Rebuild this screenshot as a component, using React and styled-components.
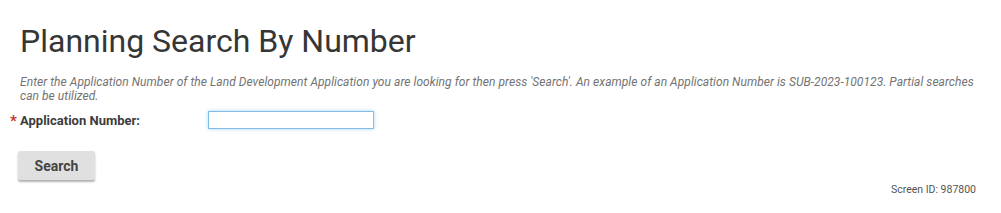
import React from 'react'
import styled, { createGlobalStyle } from 'styled-components'

const GlobalStyle = createGlobalStyle`
  body {
    margin: 0;
    background: #ffffff;
    font-family: Roboto, "Liberation Sans", Arial, sans-serif;
  }
`

const Page = styled.div`
  display: flex;
  flex-direction: column;
  padding: 22px 25px 0 20px;
`

const Title = styled.h1`
  margin: 0;
  font-size: 32px;
  line-height: 38px;
  font-weight: 400;
  color: #363636;
`

const Intro = styled.p`
  margin: 15px 0 0;
  font-size: 12px;
  line-height: 14px;
  font-style: italic;
  color: #737373;
  letter-spacing: 0.05px;
`

const FieldRow = styled.div`
  display: flex;
  align-items: center;
  margin-top: 8px;
  height: 18px;
`

const Label = styled.label`
  position: relative;
  width: 188px;
  font-size: 13px;
  font-weight: 700;
  color: #3c3c3c;
`

const Required = styled.span`
  position: absolute;
  left: -10px;
  top: 1px;
  color: #c0392b;
  font-size: 15px;
  line-height: 15px;
`

const Input = styled.input`
  box-sizing: border-box;
  width: 166px;
  height: 18px;
  padding: 0 2px;
  border: 1px solid #7dbde6;
  box-shadow: 0 0 4px rgba(120, 190, 235, 0.6);
  outline: none;
  font-family: inherit;
  font-size: 12px;
`

const Button = styled.button`
  align-self: flex-start;
  margin-top: 22px;
  margin-left: -2px;
  width: 77px;
  height: 29px;
  border: none;
  border-radius: 2px;
  background: #e0e0e0;
  box-shadow: 0 2px 2px rgba(0, 0, 0, 0.3);
  font-family: inherit;
  font-size: 14px;
  font-weight: 700;
  color: #444444;
  cursor: pointer;
`

const Footer = styled.div`
  display: flex;
  justify-content: flex-end;
  margin-top: 3px;
  font-size: 10.5px;
  color: #555555;
`

export default function App() {
  return (
    <Page>
      <GlobalStyle />
      <Title>Planning Search By Number</Title>
      <Intro>
        Enter the Application Number of the Land Development Application you are looking for then press 'Search'. An example of an Application Number is SUB-2023-100123. Partial searches can be utilized.
      </Intro>
      <FieldRow>
        <Label htmlFor="appNumber">
          <Required>*</Required>
          Application Number:
        </Label>
        <Input id="appNumber" autoFocus />
      </FieldRow>
      <Button>Search</Button>
      <Footer>Screen ID: 987800</Footer>
    </Page>
  )
}
